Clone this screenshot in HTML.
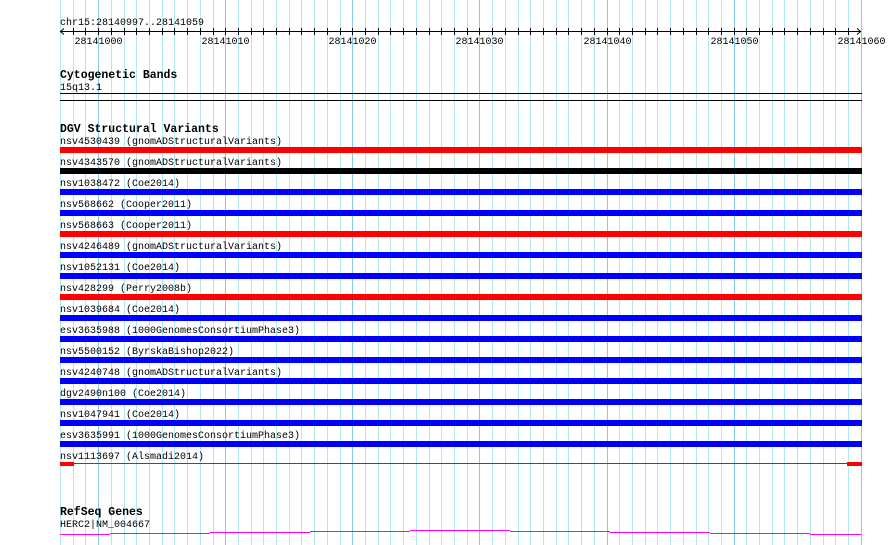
<!DOCTYPE html>
<html><head><meta charset="utf-8"><style>
html,body{margin:0;padding:0;background:#fff;width:890px;height:545px;overflow:hidden}
svg{display:block}
text{font-family:"Liberation Mono",monospace;font-size:10px;fill:#000}
.b{font-weight:bold;font-size:11.5px}
rect,line{shape-rendering:crispEdges}
</style></head><body>
<svg width="890" height="545" xmlns="http://www.w3.org/2000/svg">
<g id="grid"></g>
<g id="fg"></g>
</svg>
<script>
const ns="http://www.w3.org/2000/svg";
const g=document.getElementById('grid'),f=document.getElementById('fg');
function el(p,t,a,txt){const e=document.createElementNS(ns,t);for(const k in a)e.setAttribute(k,a[k]);if(txt!==undefined)e.textContent=txt;p.appendChild(e);return e;}
const X=k=>Math.round(60+k*12.71)+0.5;
for(let k=0;k<=63;k++){const maj=(k-3)%10==0;el(g,'line',{x1:X(k),x2:X(k),y1:0,y2:545,stroke:maj?'#8cc8e8':'#b4e8f0','stroke-width':1});}
el(f,'text',{x:60,y:25},'chr15:28140997..28141059');
el(f,'line',{x1:60,x2:861,y1:31.5,y2:31.5,stroke:'#000'});
el(f,'path',{d:'M64 28.5 L60.5 31.5 L64 34.5 M857 28.5 L860.5 31.5 L857 34.5',stroke:'#000',fill:'none'});
for(let k=1;k<63;k++){el(f,'line',{x1:X(k),x2:X(k),y1:28,y2:35,stroke:'#000'});}
for(let i=0;i<7;i++){el(f,'text',{x:X(3+10*i),y:44,'text-anchor':'middle'},String(28141000+i*10));}
el(f,'text',{x:60,y:78,class:'b'},'Cytogenetic Bands');
el(f,'text',{x:60,y:90},'15q13.1');
el(f,'rect',{x:60,y:93,width:802,height:1,fill:'#000'});
el(f,'rect',{x:60,y:100,width:802,height:1,fill:'#000'});
el(f,'text',{x:60,y:132,class:'b'},'DGV Structural Variants');
const rows=[['nsv4530439 (gnomADStructuralVariants)','#f00'],['nsv4343570 (gnomADStructuralVariants)','#000'],['nsv1038472 (Coe2014)','#00f'],['nsv568662 (Cooper2011)','#00f'],['nsv568663 (Cooper2011)','#f00'],['nsv4246489 (gnomADStructuralVariants)','#00f'],['nsv1052131 (Coe2014)','#00f'],['nsv428299 (Perry2008b)','#f00'],['nsv1039684 (Coe2014)','#00f'],['esv3635988 (1000GenomesConsortiumPhase3)','#00f'],['nsv5500152 (ByrskaBishop2022)','#00f'],['nsv4240748 (gnomADStructuralVariants)','#00f'],['dgv2490n100 (Coe2014)','#00f'],['nsv1047941 (Coe2014)','#00f'],['esv3635991 (1000GenomesConsortiumPhase3)','#00f'],['nsv1113697 (Alsmadi2014)','thin']];
rows.forEach((r,i)=>{const y=147+i*21;el(f,'text',{x:60,y:y-3},r[0]);
if(r[1]=='thin'){el(f,'rect',{x:60,y:y+1,width:802,height:1,fill:'#f00'});el(f,'rect',{x:60,y:y,width:14,height:4,fill:'#f00'});el(f,'rect',{x:847,y:y,width:15,height:4,fill:'#f00'});}
else el(f,'rect',{x:60,y:y,width:802,height:6,fill:r[1]});});
el(f,'text',{x:60,y:515,class:'b'},'RefSeq Genes');
el(f,'text',{x:60,y:527},'HERC2|NM_004667');
const segs=[[60,110,534],[110,210,533],[210,310,532],[310,410,531],[410,510,530],[510,610,531],[610,710,532],[710,810,533],[810,861,534]];
segs.forEach(s=>el(f,'rect',{x:s[0],y:s[2],width:s[1]-s[0],height:1,fill:'#f0f'}));
</script>
</body></html>
